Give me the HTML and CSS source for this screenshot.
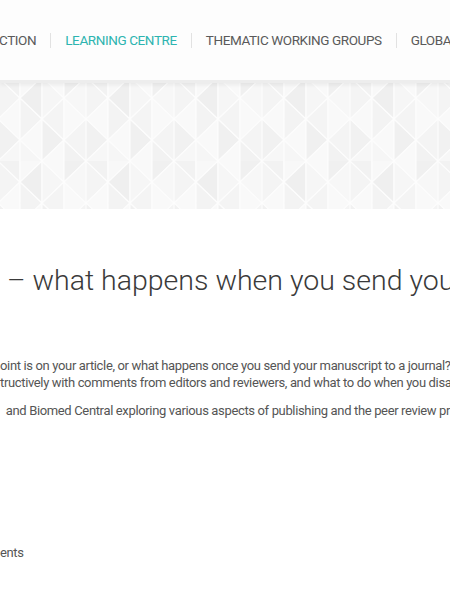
FILE: index.html
```html
<!DOCTYPE html>
<html lang="en">
<head>
  <meta charset="UTF-8">
  <meta name="viewport" content="width=device-width, initial-scale=1.0">
  <title>Learning Centre</title>
  <link rel="stylesheet" href="styles.css">
</head>
<body>
  <header class="header">
    <nav class="nav">
      <a class="nav-item">CTION</a>
      <span class="sep"></span>
      <a class="nav-item active">LEARNING CENTRE</a>
      <span class="sep"></span>
      <a class="nav-item">THEMATIC WORKING GROUPS</a>
      <span class="sep"></span>
      <a class="nav-item">GLOBAL HEALTH</a>
    </nav>
  </header>

  <div class="hero">
    <svg class="hero-bg" width="100%" height="100%">
      <defs>
        <pattern id="tri" width="88" height="84" patternUnits="userSpaceOnUse" x="-2" y="-6">
          <rect width="88" height="84" fill="#f8f8f8"/>
          <g stroke="#fdfdfd" stroke-width="1.2">
            <!-- col 0 -->
            <polygon points="0,0 0,42 22,21" fill="#f4f4f4"/>
            <polygon points="22,21 22,63 0,42" fill="#f9f9f9"/>
            <polygon points="0,42 0,84 22,63" fill="#f1f1f1"/>
            <polygon points="22,-21 22,21 0,0" fill="#f2f2f2"/>
            <polygon points="22,63 22,105 0,84" fill="#f7f7f7"/>
            <!-- col 1 -->
            <polygon points="22,-21 22,21 44,0" fill="#f8f8f8"/>
            <polygon points="22,21 22,63 44,42" fill="#f3f3f3"/>
            <polygon points="22,63 22,105 44,84" fill="#f6f6f6"/>
            <polygon points="44,0 44,42 22,21" fill="#efefef"/>
            <polygon points="44,42 44,84 22,63" fill="#f9f9f9"/>
            <!-- col 2 -->
            <polygon points="44,0 44,42 66,21" fill="#f6f6f6"/>
            <polygon points="44,42 44,84 66,63" fill="#f0f0f0"/>
            <polygon points="66,-21 66,21 44,0" fill="#f9f9f9"/>
            <polygon points="66,21 66,63 44,42" fill="#f4f4f4"/>
            <polygon points="66,63 66,105 44,84" fill="#f9f9f9"/>
            <!-- col 3 -->
            <polygon points="66,-21 66,21 88,0" fill="#f0f0f0"/>
            <polygon points="66,21 66,63 88,42" fill="#f9f9f9"/>
            <polygon points="66,63 66,105 88,84" fill="#f2f2f2"/>
            <polygon points="88,0 88,42 66,21" fill="#f7f7f7"/>
            <polygon points="88,42 88,84 66,63" fill="#f4f4f4"/>
          </g>
        </pattern>
      </defs>
      <rect width="100%" height="100%" fill="url(#tri)"/>
    </svg>
  </div>

  <main class="content">
    <h1 class="title">&ndash; what happens when you send your manuscript</h1>

    <div class="intro">
      <p class="line">oint is on your article, or what happens once you send your manuscript to a journal? Find out</p>
      <p class="line">tructively with comments from editors and reviewers, and what to do when you disagree</p>
      <p class="line gap">&nbsp; and Biomed Central exploring various aspects of publishing and the peer review process.</p>
    </div>

    <p class="line tail">ents</p>
  </main>
</body>
</html>
```

FILE: styles.css
```css
body {
  margin: 0;
  font-family: Roboto, "Liberation Sans", sans-serif;
  background: #fff;
  overflow: hidden;
  width: 450px;
}
.header {
  height: 80px;
  background: #fdfdfd;
  box-shadow: 0 2px 4px rgba(0, 0, 0, 0.06);
  border-bottom: 3px solid #ededed;
  display: flex;
  align-items: center;
  position: relative;
  z-index: 1;
}
.nav {
  display: flex;
  align-items: center;
  gap: 14px;
  white-space: nowrap;
  margin-left: -1px;
}
.nav-item {
  font-size: 13.5px;
  letter-spacing: -0.4px;
  color: #5a5a5a;
}
.nav-item.active {
  color: #2db4b0;
}
.sep {
  width: 1px;
  height: 15px;
  background: #e2e2e2;
}
.hero {
  height: 126px;
}
.hero-bg {
  display: block;
}
.content {
  white-space: nowrap;
  overflow: hidden;
}
.title {
  margin: 0;
  padding: 55px 0 0 7px;
  font-size: 28.5px;
  font-weight: 300;
  color: #3a3a3a;
  line-height: 34px;
}
.intro {
  padding-top: 59px;
}
.line {
  margin: 0;
  font-size: 13px;
  letter-spacing: -0.35px;
  line-height: 17px;
  color: #555;
}
.line.gap {
  margin-top: 11px;
}
.tail {
  margin-top: 125px;
}
```
